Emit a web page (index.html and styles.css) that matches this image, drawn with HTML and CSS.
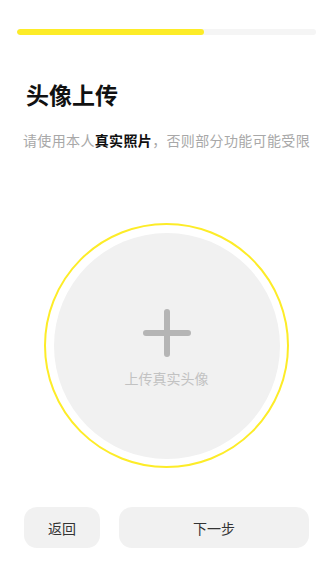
FILE: index.html
```html
<!DOCTYPE html>
<html lang="zh-CN">
<head>
    <meta charset="UTF-8">
    <meta name="viewport" content="width=device-width, initial-scale=1.0">
    <title>头像上传</title>
    <link rel="stylesheet" href="styles.css">
</head>
<body>
    <!-- Step progress -->
    <div class="progress">
        <div class="progress-fill"></div>
    </div>

    <div class="title">头像上传</div>
    <div class="subtitle">请使用本人<b>真实照片</b>，否则部分功能可能受限</div>

    <!-- Avatar picker -->
    <div class="avatar-ring">
        <div class="avatar">
            <svg class="plus" width="48" height="48" viewBox="0 0 48 48">
                <path d="M24 3 V45 M3 24 H45" stroke="#b5b5b5" stroke-width="6" stroke-linecap="round" fill="none"/>
            </svg>
            <div class="avatar-text">上传真实头像</div>
        </div>
    </div>

    <!-- Bottom actions -->
    <div class="actions">
        <button class="btn btn-back">返回</button>
        <button class="btn btn-next">下一步</button>
    </div>
</body>
</html>
```

FILE: styles.css
```css
body {
    margin: 0;
    padding: 0;
    background-color: #ffffff;
    font-family: "Noto Sans CJK SC", "Noto Sans", sans-serif;
    color: #111;
}

/* Progress bar */
.progress {
    margin: 29px 4px 0 17px;
    height: 6px;
    border-radius: 3px;
    background-color: #f5f5f5;
    overflow: hidden;
}

.progress-fill {
    width: 187px;
    height: 100%;
    border-radius: 3px;
    background-color: #fdec28;
}

/* Heading */
.title {
    margin-top: 44px;
    padding-left: 26px;
    font-size: 23px;
    line-height: 30px;
    font-weight: bold;
    color: #111;
}

.subtitle {
    margin-top: 21px;
    padding-left: 23px;
    font-size: 14px;
    line-height: 20px;
    letter-spacing: 0.35px;
    color: #a8a8a8;
    white-space: nowrap;
}

.subtitle b {
    color: #111;
}

/* Avatar */
.avatar-ring {
    box-sizing: border-box;
    width: 245px;
    height: 245px;
    margin: 73px 0 0 44px;
    padding: 7.5px;
    border: 2px solid #fdec28;
    border-radius: 50%;
}

.avatar {
    width: 100%;
    height: 100%;
    box-sizing: border-box;
    padding-top: 5px;
    border-radius: 50%;
    background-color: #f1f1f1;
    display: flex;
    flex-direction: column;
    align-items: center;
    justify-content: center;
}

.plus {
    display: block;
}

.avatar-text {
    margin-top: 11px;
    font-size: 14px;
    line-height: 20px;
    color: #c2c2c2;
}

/* Buttons */
.actions {
    display: flex;
    gap: 19px;
    margin-top: 39px;
    padding: 0 11px 0 24px;
}

.btn {
    height: 41px;
    border: none;
    border-radius: 13px;
    background-color: #f1f1f1;
    font-family: inherit;
    font-size: 14px;
    color: #333;
    padding: 0;
}

.btn-back {
    width: 76px;
}

.btn-next {
    flex: 1;
}
```
